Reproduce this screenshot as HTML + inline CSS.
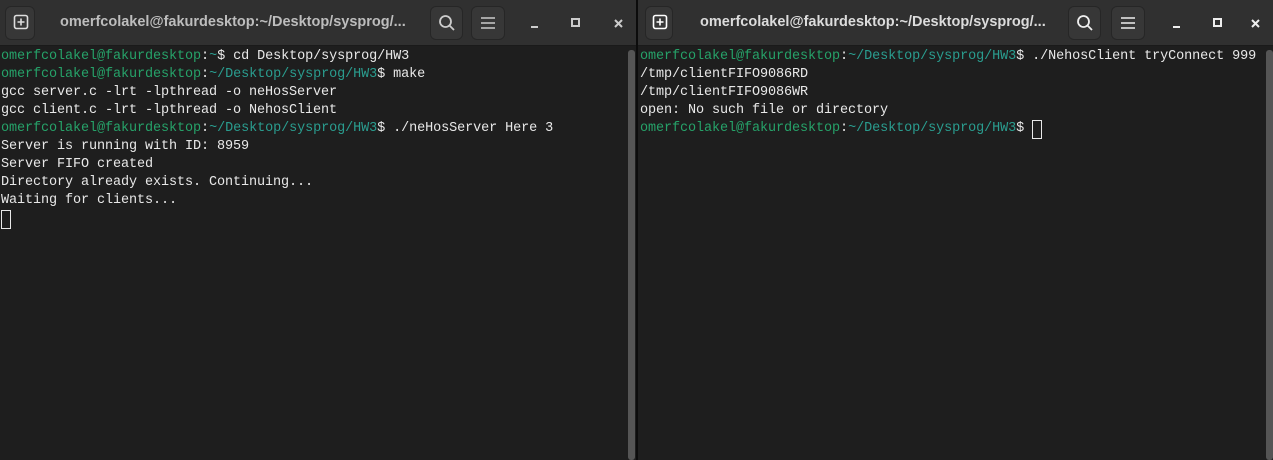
<!DOCTYPE html>
<html><head><style>
*{margin:0;padding:0;box-sizing:border-box}
body{width:1273px;height:460px;background:#1e1e1e;position:relative;overflow:hidden;font-family:"Liberation Sans",sans-serif}
.win{position:absolute;top:0;height:460px;background:#1e1e1e}
.hdr{position:absolute;left:0;right:0;top:0;height:46px;background:#303030;border-bottom:1px solid #1a1a1a}
.btn{position:absolute;top:6px;height:34px;background:#373737;border:1px solid #262626;border-radius:6px}
.title{position:absolute;top:14px;color:#dcdcdc;font-weight:bold;font-size:14.5px;white-space:nowrap}
.term{position:absolute;top:48px;font-family:"Liberation Mono",monospace;font-size:13.5px;letter-spacing:-0.1px;line-height:18px;color:#e8e8e8;white-space:pre}
.g{color:#26a269}.b{color:#2a9d8f}
.cur{display:inline-block;width:10px;height:19px;border:1px solid #e8e8e8;vertical-align:top;margin-top:0}
.sb{position:absolute;width:7px;background:#555;border-radius:3px}
svg{position:absolute}
</style></head><body>
<div class="win" style="left:0;width:636px">
 <div class="hdr">
  <div class="btn" style="left:5px;width:30px"></div>
  <svg style="left:13px;top:14px" width="16" height="16" viewBox="0 0 16 16"><rect x="1.5" y="1.5" width="13" height="13" rx="2" fill="none" stroke="#ddd" stroke-width="1.6"/><path d="M8 4.5v7M4.5 8h7" stroke="#ddd" stroke-width="1.6"/></svg>
  <div class="title" style="left:60px;color:#bdbdbd">omerfcolakel@fakurdesktop:~/Desktop/sysprog/...</div>
  <div class="btn" style="left:430px;width:33px"></div>
  <svg style="left:438px;top:14px" width="18" height="18" viewBox="0 0 18 18"><circle cx="7.5" cy="7.5" r="5.5" fill="none" stroke="#ccc" stroke-width="1.8"/><path d="M11.5 11.5l4.5 4.5" stroke="#ccc" stroke-width="1.8"/></svg>
  <div class="btn" style="left:471px;width:34px"></div>
  <svg style="left:480px;top:15px" width="16" height="16" viewBox="0 0 16 16"><path d="M1 3h14M1 8h14M1 13h14" stroke="#ccc" stroke-width="1.6"/></svg>
  <svg style="left:530px;top:15px" width="80" height="16" viewBox="0 0 80 16"><path d="M1 12h7" stroke="#ccc" stroke-width="2"/><rect x="42" y="4" width="7" height="7" fill="none" stroke="#ccc" stroke-width="2"/></svg>
  <svg style="left:613px;top:15px" width="12" height="16" viewBox="0 0 12 16"><path d="M2 5l7 7M9 5l-7 7" stroke="#ccc" stroke-width="2"/></svg>
 </div>
 <div class="term" style="left:1px"><span class="g">omerfcolakel@fakurdesktop</span>:<span class="b">~</span>$ cd Desktop/sysprog/HW3
<span class="g">omerfcolakel@fakurdesktop</span>:<span class="b">~/Desktop/sysprog/HW3</span>$ make
gcc server.c -lrt -lpthread -o neHosServer
gcc client.c -lrt -lpthread -o NehosClient
<span class="g">omerfcolakel@fakurdesktop</span>:<span class="b">~/Desktop/sysprog/HW3</span>$ ./neHosServer Here 3
Server is running with ID: 8959
Server FIFO created
Directory already exists. Continuing...
Waiting for clients...
<span class="cur"></span></div>
 <div class="sb" style="left:628px;top:50px;height:410px"></div>
</div>
<div style="position:absolute;left:636px;top:0;width:2px;height:460px;background:#0c0c0c"></div>
<div class="win" style="left:638px;width:635px">
 <div class="hdr">
  <div class="btn" style="left:7px;width:28px"></div>
  <svg style="left:14px;top:14px" width="16" height="16" viewBox="0 0 16 16"><rect x="1.5" y="1.5" width="13" height="13" rx="2" fill="none" stroke="#fff" stroke-width="1.6"/><path d="M8 4.5v7M4.5 8h7" stroke="#fff" stroke-width="1.6"/></svg>
  <div class="title" style="left:62px">omerfcolakel@fakurdesktop:~/Desktop/sysprog/...</div>
  <div class="btn" style="left:430px;width:33px"></div>
  <svg style="left:438px;top:14px" width="18" height="18" viewBox="0 0 18 18"><circle cx="7.5" cy="7.5" r="5.5" fill="none" stroke="#eee" stroke-width="1.8"/><path d="M11.5 11.5l4.5 4.5" stroke="#eee" stroke-width="1.8"/></svg>
  <div class="btn" style="left:473px;width:34px"></div>
  <svg style="left:482px;top:15px" width="16" height="16" viewBox="0 0 16 16"><path d="M1 3h14M1 8h14M1 13h14" stroke="#eee" stroke-width="1.6"/></svg>
  <svg style="left:534px;top:15px" width="16" height="16" viewBox="0 0 16 16"><path d="M1 12h7" stroke="#eee" stroke-width="2"/></svg>
  <svg style="left:574px;top:15px" width="12" height="16" viewBox="0 0 12 16"><rect x="2" y="4" width="7" height="7" fill="none" stroke="#eee" stroke-width="2"/></svg>
  <svg style="left:612px;top:15px" width="12" height="16" viewBox="0 0 12 16"><path d="M2 5l7 7M9 5l-7 7" stroke="#eee" stroke-width="2"/></svg>
 </div>
 <div class="term" style="left:2px"><span class="g">omerfcolakel@fakurdesktop</span>:<span class="b">~/Desktop/sysprog/HW3</span>$ ./NehosClient tryConnect 999
/tmp/clientFIFO9086RD
/tmp/clientFIFO9086WR
open: No such file or directory
<span class="g">omerfcolakel@fakurdesktop</span>:<span class="b">~/Desktop/sysprog/HW3</span>$ <span class="cur"></span></div>
 <div class="sb" style="left:628px;top:50px;height:410px"></div>
</div>
</body></html>
